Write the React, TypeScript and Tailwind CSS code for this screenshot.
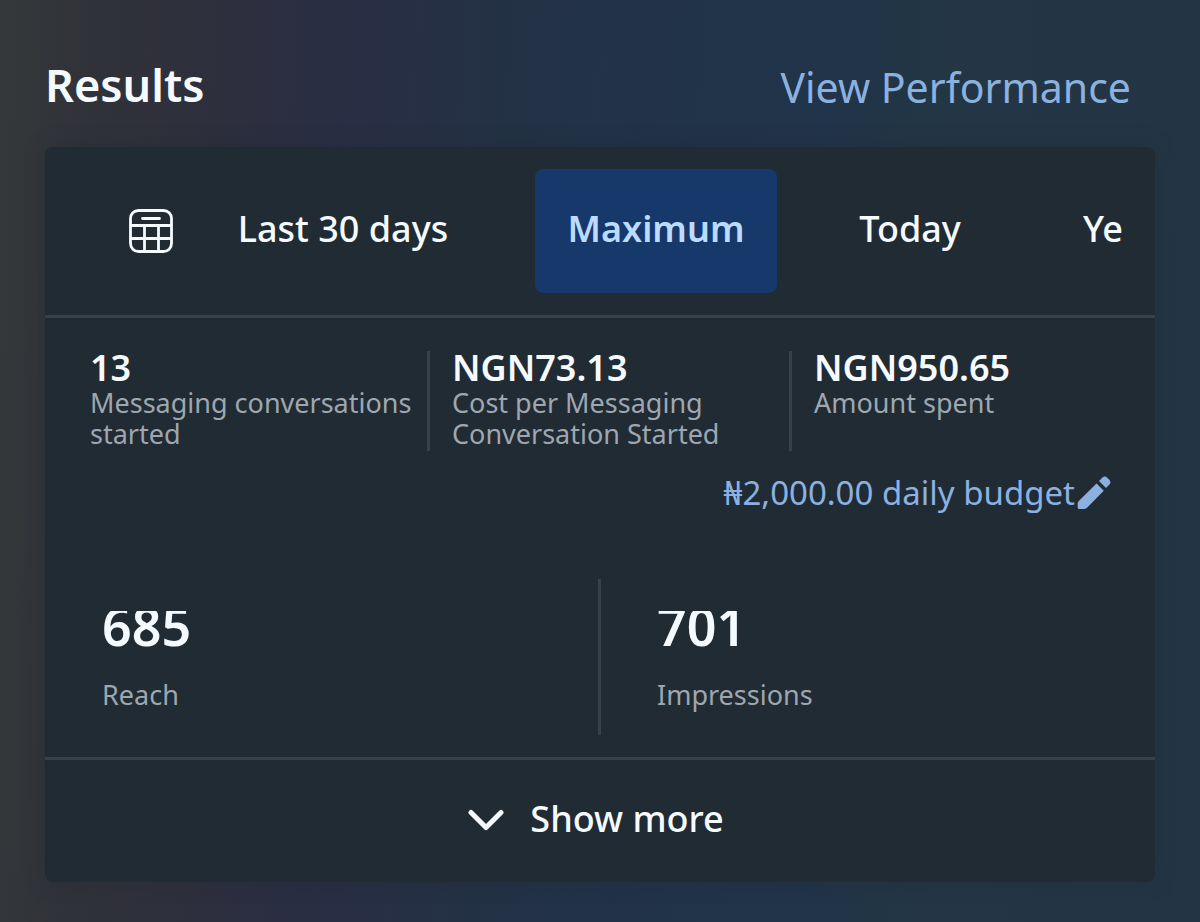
import { ReactNode } from "react";
import clsx from "clsx";

const CalendarIcon = () => (
  <svg
    viewBox="0 0 44 44"
    className="size-11 flex-none"
    fill="none"
    stroke="currentColor"
    strokeWidth="2.8"
    strokeLinecap="round"
    aria-hidden="true"
  >
    <rect x="1.5" y="1.5" width="41" height="41" rx="8" />
    <path d="M13.500 9.500h17M2 16.500h40M2 29.500h40M15.500 17v25M29.500 17v25" />
  </svg>
);

const PencilIcon = () => (
  <svg
    viewBox="0 0 34 34"
    className="size-[34px] flex-none"
    fill="currentColor"
    aria-hidden="true"
  >
    <path d="M19.500 7.500l7.300 7.300L10.300 31.600Q9 33 7.200 33H2.200Q.7 33 .7 31.500V27.500Q.7 26 1.800 25z" />
    <path d="M22 5l3.500-3.400Q28 -.4 30.200 1.700L32.300 3.800Q34.400 6.200 32.400 8.600L29 12z" />
  </svg>
);

const ChevronIcon = () => (
  <svg
    viewBox="0 0 36 24"
    className="h-6 w-9 flex-none"
    fill="none"
    stroke="currentColor"
    strokeWidth="5"
    strokeLinecap="round"
    strokeLinejoin="round"
    aria-hidden="true"
  >
    <path d="M3 5.500L18 20.500L33 5.500" />
  </svg>
);

const Tab = ({
  active,
  className,
  children,
}: {
  active?: boolean;
  className?: string;
  children: ReactNode;
}) => (
  <button
    type="button"
    aria-pressed={!!active}
    className={clsx(
      "flex h-[124px] flex-none items-center justify-center rounded-lg pb-1 text-4xl whitespace-nowrap",
      active ? "bg-[#17386b] font-semibold text-[#bcdcff]" : "font-medium",
      className
    )}
  >
    {children}
  </button>
);

const Stat = ({
  value,
  label,
  first,
}: {
  value: string;
  label: string;
  first?: boolean;
}) => (
  <div
    className={clsx(
      "h-[100px] border-l-3 pl-[22px]",
      first ? "border-transparent" : "border-[#35424b]"
    )}
  >
    <dd className="mb-0.5 text-4xl leading-[34px] font-semibold">{value}</dd>
    <dt className="text-[27px] leading-[31px] text-[#9ea7b0]">{label}</dt>
  </div>
);

const Total = ({ value, label }: { value: string; label: string }) => (
  <div className="h-[156px] border-[#35424b] pl-[57px] not-first:border-l-3 not-first:pl-14">
    {/* the number sits in a box shorter than its line, which trims its top */}
    <dd className="mt-8 flex h-12 items-end overflow-hidden text-[52px] leading-[66px] font-semibold">
      {value}
    </dd>
    <dt className="mt-5 text-[27px] leading-[31px] text-[#9ea7b0]">{label}</dt>
  </div>
);

export default function App() {
  return (
    <main className="min-h-screen bg-[linear-gradient(92deg,#35383a_0%,#303239_8%,#2e2f3d_18%,#292e44_28%,#243145_40%,#213349_55%,#213449_68%,#233644_76%,#233544_100%)] px-[45px] pt-[60px] pb-10 font-['Noto_Sans',sans-serif] text-[#f5faff]">
      <header className="flex h-[87px] items-start justify-between pr-6">
        <h1 className="text-[45px] leading-[50px] font-semibold">Results</h1>
        <a href="#performance" className="text-[41px] leading-[54px] text-[#8bb1e0]">
          View Performance
        </a>
      </header>

      <section className="rounded-lg bg-[#212b33] shadow-[0_0_20px_rgba(33,43,51,0.4)]">
        <nav
          aria-label="Date range"
          className="flex h-[171px] items-center overflow-hidden border-b-3 border-[#35424b] pl-[84px]"
        >
          <CalendarIcon />
          <Tab className="ml-5 w-[300px]">Last 30 days</Tab>
          <Tab active className="ml-[42px] w-[242px]">
            Maximum
          </Tab>
          <Tab className="ml-12 w-[170px]">Today</Tab>
          <Tab className="ml-12 w-[120px]">Ye</Tab>
        </nav>

        <dl className="grid grid-cols-3 pt-[33px] pr-1 pl-5">
          <Stat first value="13" label="Messaging conversations started" />
          <Stat value="NGN73.13" label="Cost per Messaging Conversation Started" />
          <Stat value="NGN950.65" label="Amount spent" />
        </dl>

        <div className="flex justify-end pt-5 pr-11">
          <button
            type="button"
            className="flex items-center gap-0.5 text-[33px] leading-[44px] text-[#8bb1e0]"
          >
            ₦2,000.00 daily budget
            <PencilIcon />
          </button>
        </div>

        <dl className="mt-16 grid grid-cols-2 pr-1 pb-[22px]">
          <Total value="685" label="Reach" />
          <Total value="701" label="Impressions" />
        </dl>

        <button
          type="button"
          className="flex h-[125px] w-full items-center justify-center gap-[26px] border-t-3 border-[#35424b] pr-2 pb-1 text-4xl font-medium"
        >
          <ChevronIcon />
          Show more
        </button>
      </section>
    </main>
  );
}
